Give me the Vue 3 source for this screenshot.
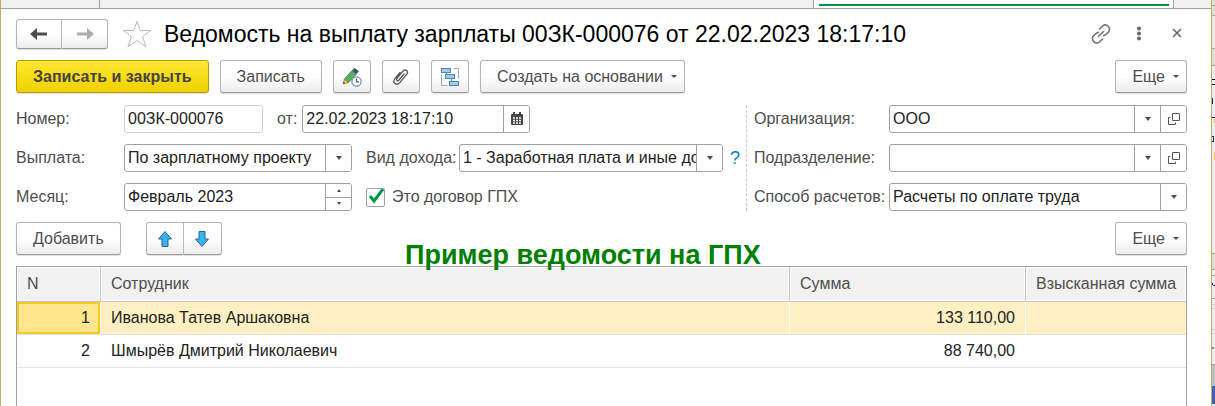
<template>
  <div class="desktop">
    <main class="window">

      <div class="tabs">
        <span class="tab"></span>
        <span class="tab wide"></span>
        <span class="tab active"></span>
        <span class="tab last"></span>
      </div>

      <div class="content">

        <header class="title-bar">
          <div class="group">
            <button class="btn nav" type="button" aria-label="Назад">
              <svg width="18" height="14" viewBox="0 0 18 14"><path d="M0 7 7 1v4.500H17v3H7V13z" fill="#4d4d4d" /></svg>
            </button>
            <button class="btn nav" type="button" aria-label="Вперед">
              <svg width="18" height="14" viewBox="0 0 18 14"><path d="M18 7 11 1v4.500H1v3H11V13z" fill="#adadad" /></svg>
            </button>
          </div>
          <button class="plain star" type="button" aria-label="В избранное">
            <svg width="30" height="28" viewBox="0 0 30 28"><path d="M15 1.500 18.400 10.500H28.500L20.500 16.700 24 26.500 15 20.600 6 26.500 9.500 16.700 1.500 10.500H11.600z" fill="#fff" stroke="#b4b8bc" /></svg>
          </button>
          <h1>Ведомость на выплату зарплаты 00ЗК-000076 от 22.02.2023 18:17:10</h1>
          <div class="window-actions">
            <button class="plain" type="button" aria-label="Получить ссылку">
              <svg width="20" height="20" viewBox="0 0 20 20" fill="none" stroke="#777" stroke-width="1.600" stroke-linecap="round">
                <path d="M8.500 5 11.500 2.200c2-1.700 4.300-1.300 5.700.1 1.700 1.600 1.900 4 .2 5.800L15 10.500c-.7.700-1.500 1-2.500 1.100" />
                <path d="M11.500 15 8.500 17.800c-2 1.700-4.300 1.300-5.700-.1-1.700-1.600-1.900-4-.2-5.800L5 9.500c.7-.700 1.500-1 2.500-1.100" />
                <path d="M7.500 12.500l5-5" />
              </svg>
            </button>
            <button class="plain" type="button" aria-label="Меню">
              <svg width="20" height="20" viewBox="0 0 20 20" fill="#666"><circle cx="10" cy="4.500" r="2" /><circle cx="10" cy="9.500" r="2" /><circle cx="10" cy="14.500" r="2" /></svg>
            </button>
            <button class="plain" type="button" aria-label="Закрыть">
              <svg width="20" height="20" viewBox="0 0 20 20"><path d="M6 5l8 8M14 5l-8 8" stroke="#666" stroke-width="1.600" /></svg>
            </button>
          </div>
        </header>

        <div class="toolbar">
          <button class="btn primary" type="button">Записать и закрыть</button>
          <button class="btn" type="button">Записать</button>
          <button class="btn icon" type="button" aria-label="Отложенная запись">
            <svg width="20" height="20" viewBox="0 0 20 20">
              <path d="M10 3.500 14.500 7 6 16 2 12.500z" fill="#4fb35c" stroke="#2c7a3c" stroke-width=".7" />
              <path d="M10 3.500 12.500 1 17 4.300 14.500 7z" fill="#44506a" />
              <path d="M2.500 12 6.500 15.500 1 17z" fill="#f0b95c" stroke="#a5712b" stroke-width=".7" />
              <path d="M1 17l.7-2 1.500 1.300z" fill="#444" />
              <circle cx="14.500" cy="14.500" r="4.600" fill="#fff" stroke="#6e8aa8" stroke-width="1.200" />
              <path d="M14.500 11.500v3.300H17" fill="none" stroke="#3c5574" stroke-width="1.200" />
            </svg>
          </button>
          <button class="btn icon" type="button" aria-label="Присоединенные файлы">
            <svg width="20" height="20" viewBox="0 0 20 20" fill="none" stroke="#555" stroke-width="1.300" stroke-linecap="round">
              <path d="M13 7 8 13c-1.500 1.600-3.300.2-2.100-1.500l6-7.300c2.600-2.800 6 0 3.900 2.900l-7 8.500c-3.300 3.600-7.800.2-5-3.800L9 5.500" />
            </svg>
          </button>
          <button class="btn icon" type="button" aria-label="Структура подчиненности">
            <svg width="20" height="20" viewBox="0 0 20 20" fill="#a4cbe6" stroke="#4b86b0">
              <path d="M13.500 1.500h5v10M1.500 7.500v11h6" fill="none" stroke="#8ab0cb" />
              <rect x="1.500" y="1.500" width="9" height="4" />
              <rect x="5.500" y="7.500" width="9" height="4" />
              <rect x="9.500" y="14.500" width="9" height="4" />
              <path d="M6.500 5.500v2M11.500 11.500v3" />
            </svg>
          </button>
          <button class="btn menu" type="button">Создать на основании <i class="caret"></i></button>
          <button class="btn menu more" type="button">Еще <i class="caret"></i></button>
        </div>

        <form class="form" @submit.prevent>
          <div class="left">
            <div class="row">
              <label class="name" for="number">Номер:</label>
              <div class="field number"><input id="number" v-model="number" type="text" readonly></div>
              <label class="from" for="date">от:</label>
              <div class="field">
                <input id="date" v-model="date" type="text">
                <button class="side" type="button" aria-label="Выбрать дату">
                  <svg width="14" height="14" viewBox="0 0 14 14">
                    <rect x="1" y="2" width="12" height="11" rx="1" fill="#444" />
                    <path d="M4 0v3M10 0v3" stroke="#444" stroke-width="2" />
                    <path d="M3 6h2M6 6h2M9 6h2M3 8.500h2M6 8.500h2M9 8.500h2M3 11h2M6 11h2M9 11h2" stroke="#fff" stroke-width="1.500" />
                  </svg>
                </button>
              </div>
            </div>
            <div class="row">
              <label class="name" for="payment">Выплата:</label>
              <div class="field">
                <select id="payment"><option>По зарплатному проекту</option></select>
                <span class="side"><i class="caret"></i></span>
              </div>
              <label class="income" for="income">Вид дохода:</label>
              <div class="field wide">
                <select id="income"><option>1 - Заработная плата и иные до</option></select>
                <span class="side"><i class="caret"></i></span>
              </div>
              <a class="help" href="#">?</a>
            </div>
            <div class="row">
              <label class="name" for="month">Месяц:</label>
              <div class="field">
                <input id="month" v-model="month" type="text">
                <div class="spin">
                  <button type="button" aria-label="Следующий месяц"><i class="caret up"></i></button>
                  <button type="button" aria-label="Предыдущий месяц"><i class="caret small"></i></button>
                </div>
              </div>
              <input id="gph" v-model="isGph" class="check" type="checkbox">
              <label for="gph">Это договор ГПХ</label>
            </div>
          </div>

          <div class="right">
            <div class="row">
              <label for="org">Организация:</label>
              <div class="field">
                <select id="org"><option>ООО</option></select>
                <span class="side"><i class="caret"></i></span>
                <button class="side" type="button" aria-label="Открыть организацию">
                  <svg width="14" height="14" viewBox="0 0 14 14" fill="none" stroke="#555"><path d="M5.500 1.500h7v7h-7zM3.500 5.500h-2v7h7v-2" /></svg>
                </button>
              </div>
            </div>
            <div class="row">
              <label for="dept">Подразделение:</label>
              <div class="field">
                <select id="dept"><option></option></select>
                <span class="side"><i class="caret"></i></span>
                <button class="side" type="button" aria-label="Открыть подразделение">
                  <svg width="14" height="14" viewBox="0 0 14 14" fill="none" stroke="#555"><path d="M5.500 1.500h7v7h-7zM3.500 5.500h-2v7h7v-2" /></svg>
                </button>
              </div>
            </div>
            <div class="row">
              <label for="method">Способ расчетов:</label>
              <div class="field">
                <select id="method"><option>Расчеты по оплате труда</option></select>
                <span class="side"><i class="caret"></i></span>
              </div>
            </div>
          </div>
        </form>

        <div class="toolbar list-bar">
          <button class="btn" type="button">Добавить</button>
          <div class="group arrows">
            <button class="btn icon" type="button" aria-label="Переместить вверх">
              <svg width="16" height="18" viewBox="0 0 16 18"><path d="M8 1.500 14.500 9H11v7.500H5V9H1.500z" fill="#3fb0ee" stroke="#1c699e" /></svg>
            </button>
            <button class="btn icon" type="button" aria-label="Переместить вниз">
              <svg width="16" height="18" viewBox="0 0 16 18"><path d="M8 16.500 14.500 9H11V1.500H5V9H1.500z" fill="#3fb0ee" stroke="#1c699e" /></svg>
            </button>
          </div>
          <strong class="note">Пример ведомости на ГПХ</strong>
          <button class="btn menu more" type="button">Еще <i class="caret"></i></button>
        </div>

        <div class="list">
          <table>
            <thead>
              <tr>
                <th class="col-n">N</th>
                <th>Сотрудник</th>
                <th class="col-sum">Сумма</th>
                <th class="col-taken">Взысканная сумма</th>
              </tr>
            </thead>
            <tbody>
              <tr v-for="row in rows" :key="row.n" :class="{ selected: row.n === current }" @click="current = row.n">
                <td class="num">{{ row.n }}</td>
                <td>{{ row.name }}</td>
                <td class="num">{{ row.sum }}</td>
                <td></td>
              </tr>
            </tbody>
          </table>
        </div>

      </div>
    </main>

    <aside class="behind">
      <svg width="3" height="406" viewBox="0 0 3 406">
        <path d="M0 0h3v406H0z" fill="#ececec" />
        <path d="M0 0h3v5H0zM0 49h3v16H0zM0 254h3v15H0z" fill="#dfe0cb" />
        <path d="M0 6h3v9H0z" fill="#e6dcd0" />
        <path d="M0 16h3v32H0z" fill="#efe9e2" />
        <path d="M0 5h3v1H0zM0 15h3v1H0zM0 48h3v1H0zM0 65h3v1H0zM0 253h3v1H0zM0 269h3v1H0zM0 275h3v1H0zM0 298h3v1H0zM0 364h3v1H0z" fill="#b5a67e" />
        <path d="M0 304h3v1H0zM0 308h3v1H0zM0 329h3v1H0zM0 333h3v1H0z" fill="#ccc" />
        <path d="M0 79h3v1H0zM0 84h3v1H0zM0 117h3v1H0z" fill="#111" />
        <path d="M0 98h1v6H0zM0 136h2v1H0zM1 137h1v4H1zM0 141h2v1H0zM0 283h1v2H0zM1 285h2v1H1z" fill="#1b2a66" />
        <path d="M2 119h1v4H2zM2 152h1v8H2z" fill="#f0c070" />
        <path d="M0 347h2v2H0z" fill="#8591a0" />
        <path d="M0 365h3v21H0z" fill="#bdbdbd" />
        <path d="M0 386h3v18H0z" fill="#4462b0" />
      </svg>
    </aside>
  </div>
</template>

<script setup>
import { ref } from 'vue';

const number = ref('00ЗК-000076')
const date = ref('22.02.2023 18:17:10')
const month = ref('Февраль 2023')
const isGph = ref(true)
const current = ref(1)

const rows = [
  { n: 1, name: 'Иванова Татев Аршаковна', sum: '133 110,00' },
  { n: 2, name: 'Шмырёв Дмитрий Николаевич', sum: '88 740,00' },
]
</script>

<style>
body {
  margin: 0;
}
</style>

<style scoped>
* {
  box-sizing: border-box;
}
.desktop {
  display: flex;
  height: 100vh;
  overflow: hidden;
  font-family: "Liberation Sans", Arial, sans-serif;
  font-size: 16px;
  line-height: 20px;
  color: #4d4d4d;
  background: #fff;
}
.window {
  flex: 1;
  min-width: 0;
  display: flex;
  flex-direction: column;
  border-left: 1px solid #c2ad5c;
  border-right: 1px solid #c2ad5c;
}
.behind {
  width: 3px;
  background: #ececec;
}
.behind svg {
  display: block;
}
svg {
  flex: none;
}

.tabs {
  display: flex;
  flex: none;
  height: 9px;
  background: #f0f0f0;
}
.tab {
  border-right: 1px solid #a0a0a0;
  border-bottom: 1px solid #a0a0a0;
  width: 99px;
}
.tab.wide {
  flex: 1;
}
.tab.active {
  width: 360px;
  padding: 4px 4px 0 5px;
  background: #fff;
}
.tab.active::before {
  content: "";
  display: block;
  height: 2px;
  background: #009646;
}
.tab.last {
  width: 37px;
  border-right: none;
}

.content {
  flex: 1;
  display: flex;
  flex-direction: column;
  padding: 10px 24px 0 15px;
}
button {
  font: inherit;
  color: inherit;
  cursor: pointer;
}
.btn {
  display: flex;
  align-items: center;
  justify-content: center;
  height: 33px;
  padding: 0 16px;
  border: 1px solid #b3b3b3;
  border-bottom-color: #999;
  border-radius: 3px;
  background: linear-gradient(#fff 50%, #ececec);
  box-shadow: 0 1px 1px #ddd;
  white-space: nowrap;
}
.btn.primary {
  font-weight: bold;
  border-color: #b39b00;
  background: linear-gradient(#ffe833, #f0d000);
  color: #444;
}
.btn.icon {
  width: 38px;
  padding: 0;
}
.btn.menu {
  gap: 8px;
  padding-right: 7px;
}
.btn.more {
  margin-left: auto;
}
.btn.nav {
  width: 46px;
  height: 30px;
  padding: 0;
}
.group {
  display: flex;
}
.group .btn:first-child {
  border-radius: 3px 0 0 3px;
}
.group .btn:last-child {
  border-left: none;
  border-radius: 0 3px 3px 0;
}
.plain {
  display: flex;
  padding: 0;
  border: none;
  background: none;
}

.title-bar {
  display: flex;
  align-items: center;
  height: 30px;
}
.star {
  margin: 0 12px 0 14px;
}
h1 {
  margin: 0;
  font-size: 23px;
  line-height: 30px;
  font-weight: normal;
  color: #000;
  white-space: nowrap;
}
.window-actions {
  display: flex;
  gap: 18px;
  margin-left: auto;
}

.toolbar {
  position: relative;
  display: flex;
  gap: 11px;
  margin-top: 11px;
}
.arrows {
  margin-left: 14px;
}
.note {
  position: absolute;
  left: 389px;
  top: 18px;
  font-size: 27px;
  line-height: 30px;
  color: #008000;
  white-space: nowrap;
}

.form {
  display: flex;
  margin-top: 12px;
}
.left,
.right {
  display: flex;
  flex-direction: column;
  gap: 11px;
}
.left {
  flex: 0 0 730px;
}
.right {
  flex: 1;
  min-width: 0;
  padding-left: 7px;
  border-left: 1px dashed #ccc;
}
.row {
  display: flex;
  align-items: center;
  height: 28px;
  white-space: nowrap;
}
.name {
  width: 108px;
}
.right label {
  width: 135px;
}
.from {
  margin: 0 5px 0 14px;
}
.income {
  width: 93px;
  margin-left: 14px;
}
.field {
  display: flex;
  width: 228px;
  height: 28px;
  border: 1px solid #a0a0a0;
  border-radius: 3px;
  background: #fff;
  overflow: hidden;
}
.field.number {
  width: 139px;
  border-color: #d0d0d0;
}
.field.wide {
  width: 264px;
}
.right .field {
  flex: 1;
  min-width: 0;
}
.field input,
.field select {
  flex: 1;
  min-width: 0;
  height: 26px;
  padding: 0 0 0 3px;
  border: none;
  outline: none;
  background: none;
  appearance: none;
  font: inherit;
  color: #222;
}
.side {
  display: flex;
  flex: none;
  align-items: center;
  justify-content: center;
  width: 26px;
  padding: 0;
  border: none;
  border-left: 1px solid #a0a0a0;
  background: #fff;
}
.spin {
  display: flex;
  flex-direction: column;
  width: 26px;
  border-left: 1px solid #a0a0a0;
}
.spin button {
  display: flex;
  flex: 1;
  align-items: center;
  justify-content: center;
  padding: 0;
  border: none;
  background: #fff;
}
.spin button + button {
  border-top: 1px solid #a0a0a0;
}
.caret {
  border: 3px solid transparent;
  border-top: 4px solid #4d4d4d;
  border-bottom: none;
}
.btn .caret {
  border-top-width: 3px;
}
.caret.small {
  border-width: 3px 2px 0;
}
.caret.up {
  border-width: 0 2px 3px;
  border-bottom: 3px solid #4d4d4d;
}
.help {
  margin-left: 7px;
  font-size: 18px;
  color: #0a7cc4;
  text-decoration: none;
}
.check {
  appearance: none;
  width: 19px;
  height: 19px;
  margin: 0 7px 0 14px;
  border: 1px solid #a0a0a0;
  border-radius: 2px;
  background: #fff;
}
.check:checked {
  background: url('data:image/svg+xml,<svg xmlns="http://www.w3.org/2000/svg" viewBox="0 0 17 17"><path d="M3 7l4 5 9-12" fill="none" stroke="%23009646" stroke-width="3"/></svg>') center / 17px 17px no-repeat #fff;
}

.list {
  flex: 1;
  margin-top: 11px;
  border: 1px solid #a0a0a0;
  border-bottom: none;
}
table {
  width: 100%;
  table-layout: fixed;
  border-collapse: separate;
  border-spacing: 0;
}
th,
td {
  height: 33px;
  padding: 0 10px;
  border-bottom: 1px solid #dfe3e3;
  text-align: left;
  font-weight: normal;
  white-space: nowrap;
}
th {
  height: 35px;
  border-bottom-color: #c4c4c4;
  border-right: 1px solid #c4c4c4;
  background: #f1f1f1;
  box-shadow: inset 0 0 0 1px #fff;
}
th:last-child {
  border-right: none;
}
td {
  color: #222;
  border-right: 1px solid #fff;
}
td:last-child {
  border-right: none;
}
.num {
  text-align: right;
}
.col-n {
  width: 84px;
}
.col-sum {
  width: 236px;
}
.col-taken {
  width: 160px;
}
.selected td {
  background: #fff0c4;
}
.selected td:first-child {
  background: #ffe58c;
  box-shadow: inset 0 0 0 2px #fac81e;
}
</style>
